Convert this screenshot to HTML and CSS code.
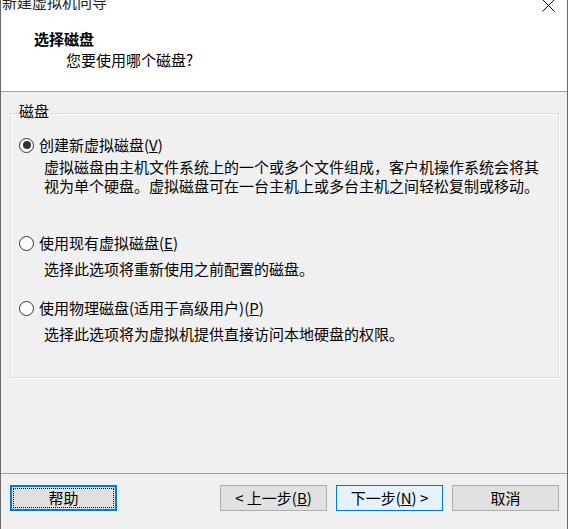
FILE: index.html
```html
<!DOCTYPE html>
<html lang="zh-CN">
<head>
<meta charset="utf-8">
<title>新建虚拟机向导</title>
<link rel="stylesheet" href="styles.css">
</head>
<body>
<div class="window">
  <header class="header">
    <div class="titlebar">
      <span class="title">新建虚拟机向导</span>
      <svg class="close" width="13" height="13" viewBox="0 0 13 13"><path d="M0.5 0.5 L12.5 12.5 M12.5 0.5 L0.5 12.5" stroke="#000" stroke-width="1" fill="none"/></svg>
    </div>
    <div class="heading">选择磁盘</div>
    <div class="subheading">您要使用哪个磁盘?</div>
  </header>
  <main class="content">
    <section class="group">
      <div class="group-label">磁盘</div>
      <div class="option-row row-1"><span class="radio checked"></span><span>创建新虚拟磁盘(<u>V</u>)</span></div>
      <div class="desc desc-1">虚拟磁盘由主机文件系统上的一个或多个文件组成，客户机操作系统会将其<br>视为单个硬盘。虚拟磁盘可在一台主机上或多台主机之间轻松复制或移动。</div>
      <div class="option-row row-2"><span class="radio"></span><span>使用现有虚拟磁盘(<u>E</u>)</span></div>
      <div class="desc">选择此选项将重新使用之前配置的磁盘。</div>
      <div class="option-row row-3"><span class="radio"></span><span>使用物理磁盘(适用于高级用户)(<u>P</u>)</span></div>
      <div class="desc">选择此选项将为虚拟机提供直接访问本地硬盘的权限。</div>
    </section>
  </main>
  <footer class="footer">
    <button class="btn btn-focus">帮助</button>
    <div class="nav">
      <button class="btn">&lt; 上一步(<u>B</u>)</button>
      <button class="btn btn-default">下一步(<u>N</u>) &gt;</button>
      <button class="btn">取消</button>
    </div>
  </footer>
</div>
</body>
</html>
```

FILE: styles.css
```css
html, body {
  margin: 0;
  padding: 0;
  background: #ffffff;
}

body {
  font-family: "Noto Sans CJK SC", "Noto Sans", sans-serif;
  font-size: 15px;
  color: #000;
}

.window {
  box-sizing: border-box;
  width: 568px;
  height: 529px;
  border-left: 1px solid #6a6a6a;
  border-right: 1px solid #6a6a6a;
  overflow: hidden;
  display: flex;
  flex-direction: column;
  background: #f0f0f0;
}

.header {
  height: 91px;
  background: #fff;
  border-bottom: 1px solid #a0a0a0;
  flex: none;
}

.titlebar {
  margin-top: -6px;
  height: 16px;
  display: flex;
  justify-content: space-between;
  align-items: flex-start;
  padding-left: 1px;
  padding-right: 12px;
}

.title {
  line-height: 16px;
  color: #222;
}

.close {
  margin-top: 5px;
  display: block;
}

.heading {
  margin-top: 19px;
  padding-left: 33px;
  font-weight: bold;
  line-height: 20px;
}

.subheading {
  margin-top: 1px;
  padding-left: 65px;
  line-height: 20px;
}

.content {
  flex: 1;
  padding: 0 8px 0 9px;
}

.group {
  margin-top: 21px;
  border: 1px solid #dcdcdc;
  box-shadow: inset 1px 1px 0 #fff, 1px 1px 0 #fff;
  padding: 0 0 34px 0;
}

.group-label {
  margin: -12px 0 0 7px;
  padding: 0 1px;
  width: fit-content;
  line-height: 18px;
  background: #f0f0f0;
}

.option-row {
  display: flex;
  align-items: center;
  gap: 5px;
  height: 20px;
  line-height: 20px;
  padding-left: 8px;
}

.row-1 { margin-top: 15px; }
.row-2 { margin-top: 38px; }
.row-3 { margin-top: 20px; }

.radio {
  box-sizing: border-box;
  width: 15px;
  height: 15px;
  border: 1px solid #333;
  border-radius: 50%;
  background: #fff;
  display: flex;
  align-items: center;
  justify-content: center;
  flex: none;
}

.radio.checked::after {
  content: "";
  width: 8px;
  height: 8px;
  border-radius: 50%;
  background: #333;
}

.desc {
  margin-top: 6px;
  padding-left: 33px;
  line-height: 19px;
}

.desc-1 { margin-top: 2px; }

.footer {
  flex: none;
  height: 44px;
  border-top: 1px solid #a0a0a0;
  padding: 11px 8px 0 9px;
  display: flex;
  justify-content: space-between;
  align-items: flex-start;
}

.nav {
  display: flex;
  gap: 9px;
}

.btn {
  box-sizing: border-box;
  width: 107px;
  height: 26px;
  margin: 0;
  padding: 0;
  font-family: inherit;
  font-size: 15px;
  line-height: 22px;
  color: #000;
  background: #e1e1e1;
  border: 1px solid #adadad;
  border-radius: 0;
}

.btn-focus {
  border: 2px solid #0078d7;
  outline: 1px dotted #000;
  outline-offset: -4px;
}

.btn-default {
  border: 1px solid #0078d7;
  background: #e5f1fb;
}
```
